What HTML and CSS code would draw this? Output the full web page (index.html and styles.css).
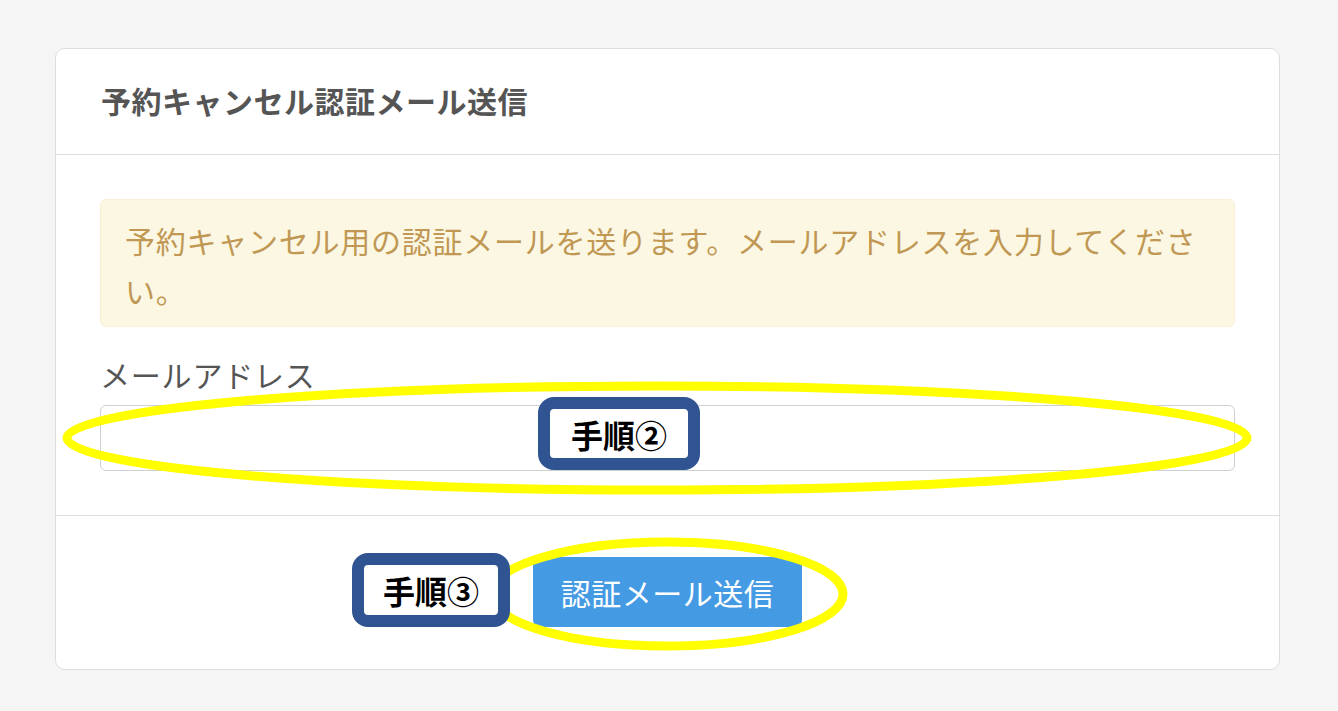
FILE: index.html
```html
<!DOCTYPE html>
<html lang="ja">
<head>
    <meta charset="UTF-8">
    <title>予約キャンセル認証メール送信</title>
    <link rel="stylesheet" href="styles.css">
</head>
<body>

    <div class="card">
        <div class="card-header">
            <h3 class="card-title">予約キャンセル認証メール送信</h3>
        </div>

        <div class="card-body">
            <div class="alert">予約キャンセル用の認証メールを送ります。メールアドレスを入力してください。</div>
            <label class="form-label" for="email">メールアドレス</label>
            <input class="form-input" type="email" id="email">
        </div>

        <div class="card-footer">
            <button class="btn-send">認証メール送信</button>
        </div>
    </div>

    <!-- 手順の注釈 -->
    <svg class="marks" width="1338" height="711" viewBox="0 0 1338 711">
        <ellipse cx="657" cy="438" rx="590" ry="52" fill="none" stroke="#ffff00" stroke-width="9"/>
        <ellipse cx="667" cy="594" rx="176" ry="52" fill="none" stroke="#ffff00" stroke-width="9"/>
    </svg>
    <div class="step step2">手順②</div>
    <div class="step step3">手順③</div>

</body>
</html>
```

FILE: styles.css
```css
body {
    font-family: "Noto Sans CJK JP", "Noto Sans", sans-serif;
    background: #f5f5f5;
    margin: 0;
    padding: 0;
    color: #555;
}
.card {
    width: 1225px;
    margin: 48px 0 0 55px;
    background: white;
    border: 1px solid #dedede;
    border-radius: 10px;
    box-sizing: border-box;
}
.card-header {
    height: 105px;
    padding: 0 45px;
    display: flex;
    align-items: center;
    border-bottom: 1px solid #dedede;
}
.card-title {
    margin: 0 0 4px 0;
    font-size: 30px;
    font-weight: bold;
    color: #555;
    letter-spacing: 0.5px;
}
.card-body {
    padding: 44px 44px 44px 44px;
}
.alert {
    background: #fcf7e3;
    border: 1px solid #faefd6;
    border-radius: 6px;
    color: #c09853;
    font-size: 30px;
    line-height: 50px;
    padding: 15px 24px 11px 24px;
    letter-spacing: 0.75px;
}
.form-label {
    display: block;
    margin-top: 22px;
    font-size: 30px;
    line-height: 50px;
    color: #555;
    letter-spacing: 0.8px;
}
.form-input {
    display: block;
    width: 100%;
    height: 66px;
    margin-top: 6px;
    box-sizing: border-box;
    border: 1px solid #cfcfcf;
    border-radius: 6px;
    font-size: 28px;
    padding: 0 20px;
    background: white;
}
.card-footer {
    border-top: 1px solid #dedede;
    padding: 41px 0 42px 0;
    text-align: center;
}
.btn-send {
    height: 70px;
    padding: 0 28px;
    font-family: inherit;
    font-size: 30px;
    color: white;
    background: #449be3;
    border: none;
    border-radius: 7px;
    cursor: pointer;
    letter-spacing: 0.5px;
}
.btn-send:hover {
    background: #3a8fd6;
}
.marks {
    position: absolute;
    top: 0;
    left: 0;
    pointer-events: none;
}
.step {
    position: absolute;
    box-sizing: border-box;
    display: flex;
    align-items: center;
    justify-content: center;
    background: white;
    border: 12px solid #2f5491;
    border-radius: 16px;
    color: black;
    font-size: 32px;
    font-weight: bold;
}
.step2 {
    left: 538px;
    top: 397px;
    width: 162px;
    height: 73px;
}
.step3 {
    left: 352px;
    top: 553px;
    width: 158px;
    height: 74px;
}
```
